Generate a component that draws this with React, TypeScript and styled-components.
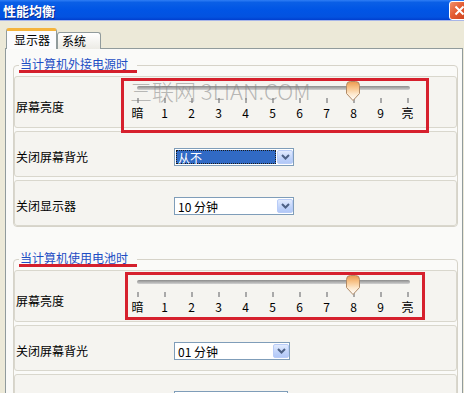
import React from "react"
import styled, { createGlobalStyle } from "styled-components"

const STEPS = ["暗", "1", "2", "3", "4", "5", "6", "7", "8", "9", "亮"]

const GlobalStyle = createGlobalStyle`
  html, body {
    margin: 0;
    padding: 0;
    background: #ece9d8;
  }
  body {
    font-family: "Noto Sans CJK SC", "Noto Sans", sans-serif;
    font-size: 12px;
    color: #000;
  }
`

interface MarkProps {
  $x: number,
  $y: number,
  $w: number,
  $h: number
}

interface BrightnessProps {
  mark: MarkProps,
  watermark?: boolean
}

const Thumb = () => (
  <ThumbSvg width="14" height="20" viewBox="0 0 14 20">
    <defs>
      <linearGradient id="thumbFill" x1="0" y1="0" x2="0" y2="1">
        <stop offset="0" stopColor="#ec9a4e" />
        <stop offset="0.35" stopColor="#f8c58c" />
        <stop offset="0.65" stopColor="#fde7cb" />
        <stop offset="1" stopColor="#ffffff" />
      </linearGradient>
    </defs>
    <path
      d="M0.5 4.5 Q0.5 0.5 4.5 0.5 H9.5 Q13.5 0.5 13.5 4.5 V12.5 L7 19.5 L0.5 12.5 Z"
      fill="url(#thumbFill)"
      stroke="#b08a66"
    />
  </ThumbSvg>
)

const Slider = ({ value }: { value: number }) => (
  <SliderBox>
    <TrackArea>
      <TrackLine />
      <ThumbHolder style={{ left: 13 + value * 27 - 7 }}>
        <Thumb />
      </ThumbHolder>
    </TrackArea>
    <TickRow>
      {STEPS.map((s) => <Tick key={s} />)}
    </TickRow>
    <StepRow>
      {STEPS.map((s) => <Step key={s}>{s}</Step>)}
    </StepRow>
  </SliderBox>
)

const BrightnessRow = ({ mark, watermark }: BrightnessProps) => (
  <Row $tall>
    <SliderLabel>屏幕亮度</SliderLabel>
    <Slider value={8} />
    {watermark && <Watermark>三联网 3LIAN.COM</Watermark>}
    <RedMark $x={mark.$x} $y={mark.$y} $w={mark.$w} $h={mark.$h} />
  </Row>
)

const SelectRow = ({ label, value, width, focused }: { label?: string, value?: string, width: number, focused?: boolean }) => (
  <Row>
    <RowLabel>{label}</RowLabel>
    <SelectBox $w={width}>
      <SelectValue $focused={focused}>{value}</SelectValue>
      <ArrowButton>
        <svg width="9" height="6" viewBox="0 0 9 6">
          <path d="M1 1 L4.5 4.5 L8 1" fill="none" stroke="#4d6185" strokeWidth="2" />
        </svg>
      </ArrowButton>
    </SelectBox>
  </Row>
)

export default function App() {
  return (
    <>
      <GlobalStyle />
      <Window>
        <TitleBar>
          <span>性能均衡</span>
          <CloseButton>
            <svg width="11" height="11" viewBox="0 0 11 11">
              <path d="M1.5 1.5 L9.5 9.5 M9.5 1.5 L1.5 9.5" stroke="#fff" strokeWidth="2" />
            </svg>
          </CloseButton>
        </TitleBar>
        <Body>
          <TabStrip>
            <Tab $active>显示器</Tab>
            <Tab>系统</Tab>
          </TabStrip>
          <Panel>
            <Group>
              <GroupTitle>当计算机外接电源时</GroupTitle>
              <RowList>
                <BrightnessRow watermark mark={{ $x: 106, $y: 1, $w: 308, $h: 55 }} />
                <SelectRow label="关闭屏幕背光" value="从不" width={120} focused />
                <SelectRow label="关闭显示器" value="10 分钟" width={120} />
              </RowList>
            </Group>
            <Group>
              <GroupTitle>当计算机使用电池时</GroupTitle>
              <RowList>
                <BrightnessRow mark={{ $x: 110, $y: 1, $w: 300, $h: 48 }} />
                <SelectRow label="关闭屏幕背光" value="01 分钟" width={116} />
                <SelectRow width={114} />
              </RowList>
            </Group>
          </Panel>
        </Body>
      </Window>
    </>
  )
}

const Window = styled.div`
  width: 464px;
  height: 393px;
  overflow: hidden;
  display: flex;
  flex-direction: column;
  background: #ece9d8;
`

const TitleBar = styled.div`
  height: 21px;
  flex-shrink: 0;
  display: flex;
  align-items: center;
  justify-content: space-between;
  padding-left: 3px;
  box-sizing: border-box;
  background: linear-gradient(#2f7ef5 0%, #0a5fe6 12%, #0055e5 50%, #0352e0 85%, #003fcf 100%);
  border-bottom: 1px solid #a8b6e8;
  color: #fff;
  font-weight: bold;
  font-size: 13px;
  text-shadow: 1px 1px 0 #0b2c8f;
`

const CloseButton = styled.div`
  width: 21px;
  height: 19px;
  margin-right: -6px;
  box-sizing: border-box;
  display: flex;
  align-items: center;
  justify-content: center;
  border: 1px solid #fff;
  border-radius: 3px;
  background: linear-gradient(135deg, #f0906c 0%, #e35a30 45%, #c9401c 100%);
`

const Body = styled.div`
  flex: 1;
  display: flex;
  flex-direction: column;
  padding: 7px 1px 0 5px;
  min-height: 0;
`

const TabStrip = styled.div`
  display: flex;
  align-items: flex-end;
  padding-left: 1px;
  margin-bottom: -1px;
  position: relative;
  z-index: 1;
`

const Tab = styled.div<{ $active?: boolean }>`
  box-sizing: border-box;
  display: flex;
  align-items: center;
  border: 1px solid #919b9c;
  border-bottom: none;
  border-radius: 3px 3px 0 0;
  height: ${(p) => (p.$active ? "21px" : "17px")};
  width: ${(p) => (p.$active ? "51px" : "44px")};
  padding-left: ${(p) => (p.$active ? "7px" : "4px")};
  border-top: ${(p) => (p.$active ? "3px solid #f5b43c" : "1px solid #919b9c")};
  background: ${(p) => (p.$active ? "#fcfcfe" : "linear-gradient(#ffffff, #ecebe5)")};
  line-height: 14px;
`

const Panel = styled.div`
  flex: 1;
  border: 1px solid #919b9c;
  background: #fafaf8;
  padding: 8px 4px 0 7px;
`

const Group = styled.fieldset`
  margin: 0 0 24px;
  padding: 3px 0 0;
  min-width: 0;
  border: 1px solid #d6d3c9;
  border-radius: 4px;
`

const GroupTitle = styled.legend`
  margin-left: 5px;
  padding: 0 9px 0 1px;
  line-height: 13px;
  color: #1d4ec4;
  border-bottom: 3px solid #d41f2c;
`

const RowList = styled.div`
  display: flex;
  flex-direction: column;
  gap: 3px;
`

const Row = styled.div<{ $tall?: boolean }>`
  position: relative;
  display: flex;
  align-items: ${(p) => (p.$tall ? "flex-start" : "center")};
  height: ${(p) => (p.$tall ? "52px" : "46px")};
  box-sizing: border-box;
  padding: ${(p) => (p.$tall ? "4px 0 0 1px" : "6px 0 0 1px")};
  border: 1px solid #d9d7cd;
  border-radius: 3px;
  background: #f5f4f0;
`

const RowLabel = styled.div`
  width: 158px;
  flex-shrink: 0;
  line-height: 14px;
`

const SliderLabel = styled.div`
  width: 108px;
  flex-shrink: 0;
  margin-top: 19px;
  line-height: 14px;
`

const SliderBox = styled.div`
  display: flex;
  flex-direction: column;
  width: 297px;
`

const TrackArea = styled.div`
  position: relative;
  height: 17px;
`

const TrackLine = styled.div`
  position: absolute;
  left: 13px;
  top: 5px;
  width: 273px;
  height: 4px;
  border-radius: 2px;
  background: linear-gradient(#8c8c8c, #b4b4b4 60%, #d2d2d2);
`

const ThumbHolder = styled.div`
  position: absolute;
  top: 0;
  z-index: 1;
`

const ThumbSvg = styled.svg`
  display: block;
`

const TickRow = styled.div`
  display: grid;
  grid-template-columns: repeat(11, 27px);
  height: 5px;
`

const Tick = styled.span`
  justify-self: center;
  width: 2px;
  height: 5px;
  background: #a9a9a9;
`

const StepRow = styled.div`
  display: grid;
  grid-template-columns: repeat(11, 27px);
  padding-top: 2px;
  line-height: 16px;
`

const Step = styled.span`
  text-align: center;
`

const Watermark = styled.div`
  position: absolute;
  left: 115px;
  top: 1px;
  font-size: 22px;
  line-height: 24px;
  font-weight: 300;
  color: rgba(130, 130, 130, 0.55);
  white-space: nowrap;
  pointer-events: none;
  z-index: 2;
`

const RedMark = styled.div<MarkProps>`
  position: absolute;
  left: ${(p) => p.$x}px;
  top: ${(p) => p.$y}px;
  width: ${(p) => p.$w}px;
  height: ${(p) => p.$h}px;
  box-sizing: border-box;
  border: 3px solid #d6202d;
  pointer-events: none;
  z-index: 3;
`

const SelectBox = styled.div<{ $w: number }>`
  width: ${(p) => p.$w}px;
  height: 18px;
  box-sizing: border-box;
  display: flex;
  align-items: stretch;
  padding: 1px 0 1px 1px;
  border: 1px solid #7f9db9;
  background: #fff;
`

const SelectValue = styled.div<{ $focused?: boolean }>`
  flex: 1;
  box-sizing: border-box;
  padding-left: 1px;
  margin-right: 1px;
  line-height: 13px;
  color: ${(p) => (p.$focused ? "#fff" : "#000")};
  background: ${(p) => (p.$focused ? "#316ac5" : "transparent")};
  border: 1px dotted ${(p) => (p.$focused ? "#1a1a1a" : "transparent")};
`

const ArrowButton = styled.div`
  width: 16px;
  flex-shrink: 0;
  box-sizing: border-box;
  display: flex;
  align-items: center;
  justify-content: center;
  border: 1px solid #b9ccf7;
  border-radius: 2px;
  background: linear-gradient(#e2ebfe, #c0d3fa 60%, #b2c8f7);
`
